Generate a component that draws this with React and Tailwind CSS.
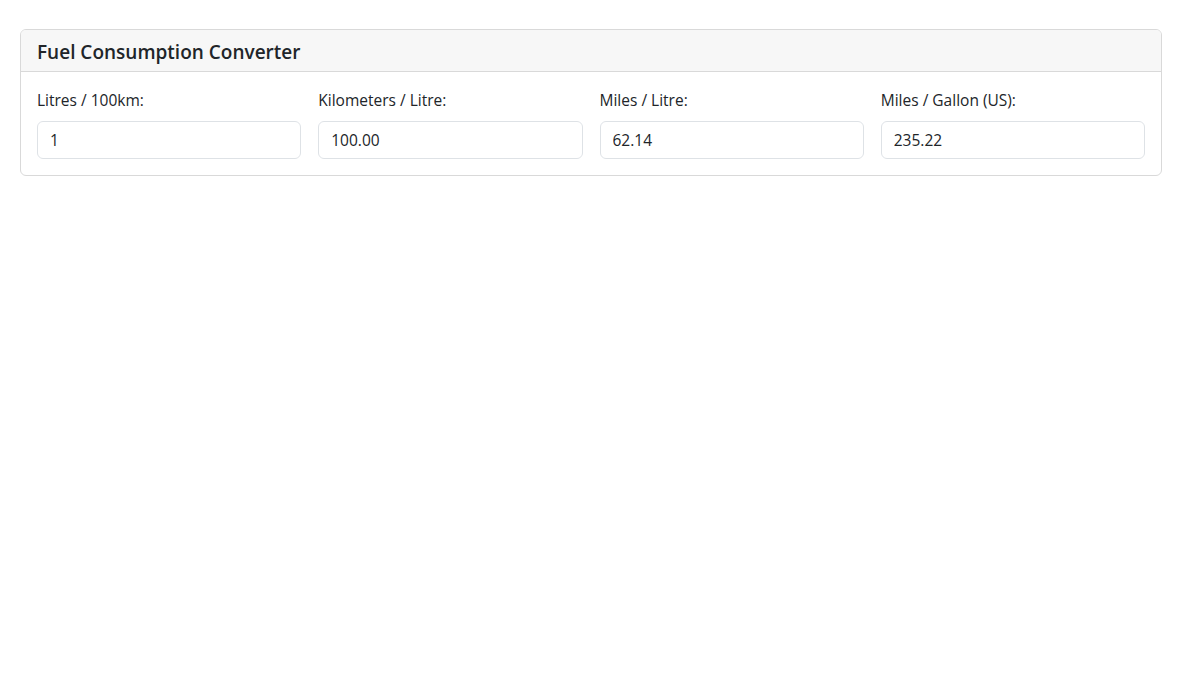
import React, { useState } from 'react';

// Unit conversion helpers, everything keyed off litres per 100 km
const MILES_PER_KM = 0.621371;
const MPG_PER_KMPL = 2.35215;

function fromL100(l100) {
  const kmpl = 100 / l100;
  return {
    kmpl: kmpl.toFixed(2),
    mpl: (kmpl * MILES_PER_KM).toFixed(2),
    mpg: (Math.ceil(kmpl * MPG_PER_KMPL * 100) / 100).toFixed(2),
  };
}

function Field({ label, value, onChange }) {
  return (
    <div className="flex flex-col">
      <label className="text-[15.5px] leading-6 text-[#212529] mb-[9px]">{label}</label>
      <input
        type="text"
        value={value}
        onChange={onChange}
        readOnly={!onChange}
        className="h-[38px] w-full px-3 text-[15.5px] text-[#212529] bg-white border border-[#dee2e6] rounded-[6px] outline-none"
      />
    </div>
  );
}

export default function App() {
  const [l100, setL100] = useState('1');
  const n = parseFloat(l100);
  const out = n > 0 ? fromL100(n) : { kmpl: '', mpl: '', mpg: '' };

  return (
    <div
      className="min-h-screen bg-white pl-5 pr-[18px] pt-[29px]"
      style={{ fontFamily: '"Open Sans", "Noto Sans", sans-serif' }}
    >
      <div className="border border-[#d9d9d9] rounded-[6px] overflow-hidden">
        <div className="bg-[#f7f7f7] border-b border-[#d9d9d9] px-4 pt-[10px] pb-[6px]">
          <h5 className="text-[19px] leading-[25px] font-semibold text-[#212529]">Fuel Consumption Converter</h5>
        </div>
        <div className="p-4 grid grid-cols-4 gap-x-[17px]">
          <Field label="Litres / 100km:" value={l100} onChange={(e) => setL100(e.target.value)} />
          <Field label="Kilometers / Litre:" value={out.kmpl} />
          <Field label="Miles / Litre:" value={out.mpl} />
          <Field label="Miles / Gallon (US):" value={out.mpg} />
        </div>
      </div>
    </div>
  );
}
